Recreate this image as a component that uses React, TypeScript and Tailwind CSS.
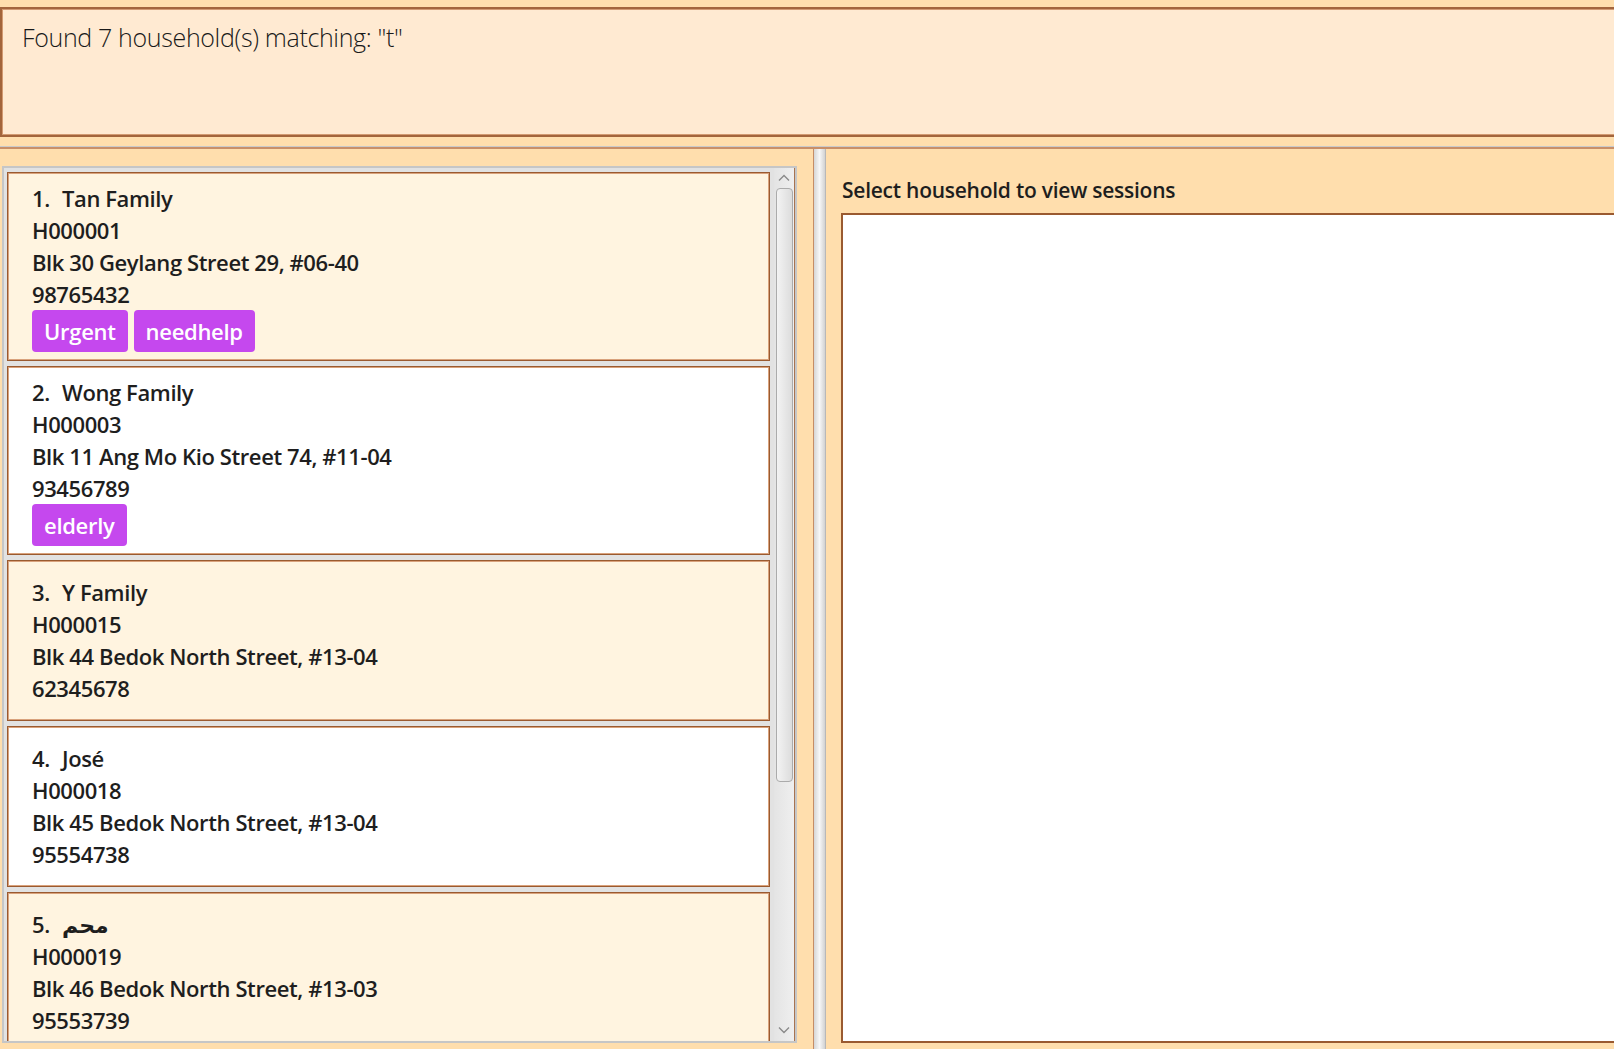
import React from "react";

type Household = {
  name: string;
  id: string;
  addr: string;
  phone: string;
  tags: string[];
};

const households: Household[] = [
  { name: "Tan Family", id: "H000001", addr: "Blk 30 Geylang Street 29, #06-40", phone: "98765432", tags: ["Urgent", "needhelp"] },
  { name: "Wong Family", id: "H000003", addr: "Blk 11 Ang Mo Kio Street 74, #11-04", phone: "93456789", tags: ["elderly"] },
  { name: "Y Family", id: "H000015", addr: "Blk 44 Bedok North Street, #13-04", phone: "62345678", tags: [] },
  { name: "José", id: "H000018", addr: "Blk 45 Bedok North Street, #13-04", phone: "95554738", tags: [] },
  { name: "محم", id: "H000019", addr: "Blk 46 Bedok North Street, #13-03", phone: "95553739", tags: [] },
];

function Card({ h, index }: { h: Household; index: number }) {
  const odd = index % 2 === 0;
  const hasTags = h.tags.length > 0;
  return (
    <div
      className={`shrink-0 border border-[#9a5a30] shadow-[inset_0_0_0_1px_#d9a27c] pl-[24px] ${
        hasTags ? "pt-[9px] pb-[8px]" : "pt-[15px] pb-[16px]"
      } ${odd ? "bg-[#fff4e0]" : "bg-white"}`}
    >
      <div className="text-[22px] leading-[32px] text-[#1e1e1e] font-semibold tracking-[-0.4px]">
        <div className="flex items-center">
          <span className="w-[30px]">{index + 1}.</span>
          <span>{h.name}</span>
        </div>
        <div>{h.id}</div>
        <div>{h.addr}</div>
        <div>{h.phone}</div>
      </div>
      {hasTags && (
        <div className="flex gap-[6px]">
          {h.tags.map((t) => (
            <div
              key={t}
              className="h-[42px] flex items-center px-[12px] rounded-[4px] bg-[#c548ee] text-white text-[22px] font-semibold tracking-[-0.3px]"
            >
              {t}
            </div>
          ))}
        </div>
      )}
    </div>
  );
}

export default function App() {
  return (
    <div className="w-[1614px] h-[1049px] overflow-hidden bg-[#ffdead] flex flex-col font-['Open_Sans','DejaVu_Sans',sans-serif]">
      {/* results display */}
      <div className="pt-[7px] shrink-0">
        <div className="w-[1640px] h-[130px] bg-[#ffead2] border-2 border-[#a3653c] shadow-[inset_0_0_0_1px_#d29a72] pl-[20px] pt-[11px]">
          <div className="text-[25px] leading-[34px] font-light text-[#1a1a1a] tracking-[-0.35px]">
            Found 7 household(s) matching: "t"
          </div>
        </div>
      </div>

      {/* split separator */}
      <div className="shrink-0 mt-[9px]">
        <div className="h-[1px] bg-[#c9c9c9]" />
        <div className="h-[2px] bg-[#c98f68]" />
      </div>

      {/* split pane */}
      <div className="flex-1 flex min-h-0">
        {/* left panel */}
        <div className="w-[813px] shrink-0 pt-[17px]">
          <div className="ml-[2px] w-[795px] h-[877px] border-2 border-[#c6c6c6] bg-[#e2e2e2] flex overflow-hidden">
            <div className="flex-1 flex flex-col gap-[5px] pt-[4px] pl-[3px] pr-[4px] overflow-hidden">
              {households.map((h, i) => (
                <Card key={h.id} h={h} index={i} />
              ))}
            </div>
            {/* scrollbar */}
            <div className="w-[21px] shrink-0 flex flex-col items-center bg-gradient-to-r from-[#e4e4e4] to-[#efefef] border-r border-[#a8734f]">
              <div className="h-[20px] flex items-center justify-center">
                <svg width="12" height="8" viewBox="0 0 12 8">
                  <path d="M1 6.5 L6 1.5 L11 6.5" fill="none" stroke="#8a8a8a" strokeWidth="1.4" />
                </svg>
              </div>
              <div className="w-[17px] h-[594px] rounded-[4px] border border-[#ababab] bg-gradient-to-r from-[#f3f3f3] to-[#dcdcdc]" />
              <div className="flex-1" />
              <div className="h-[22px] flex items-center justify-center">
                <svg width="12" height="8" viewBox="0 0 12 8">
                  <path d="M1 1.5 L6 6.5 L11 1.5" fill="none" stroke="#8a8a8a" strokeWidth="1.4" />
                </svg>
              </div>
            </div>
          </div>
        </div>

        {/* divider */}
        <div className="w-[13px] shrink-0 border-l border-[#c58d66] border-r border-r-[#b8b8b8] bg-gradient-to-r from-[#d6d6d6] via-[#f7f7f7] to-[#d2d2d2]" />

        {/* right panel */}
        <div className="flex-1 min-w-0 pt-[27px] pl-[15px]">
          <div className="text-[21px] leading-[28px] font-semibold text-[#1e1e1e] pl-[1px] tracking-[-0.25px]">
            Select household to view sessions
          </div>
          <div className="mt-[9px] w-[800px] h-[830px] bg-white border-2 border-[#9a5a30]" />
        </div>
      </div>
    </div>
  );
}
